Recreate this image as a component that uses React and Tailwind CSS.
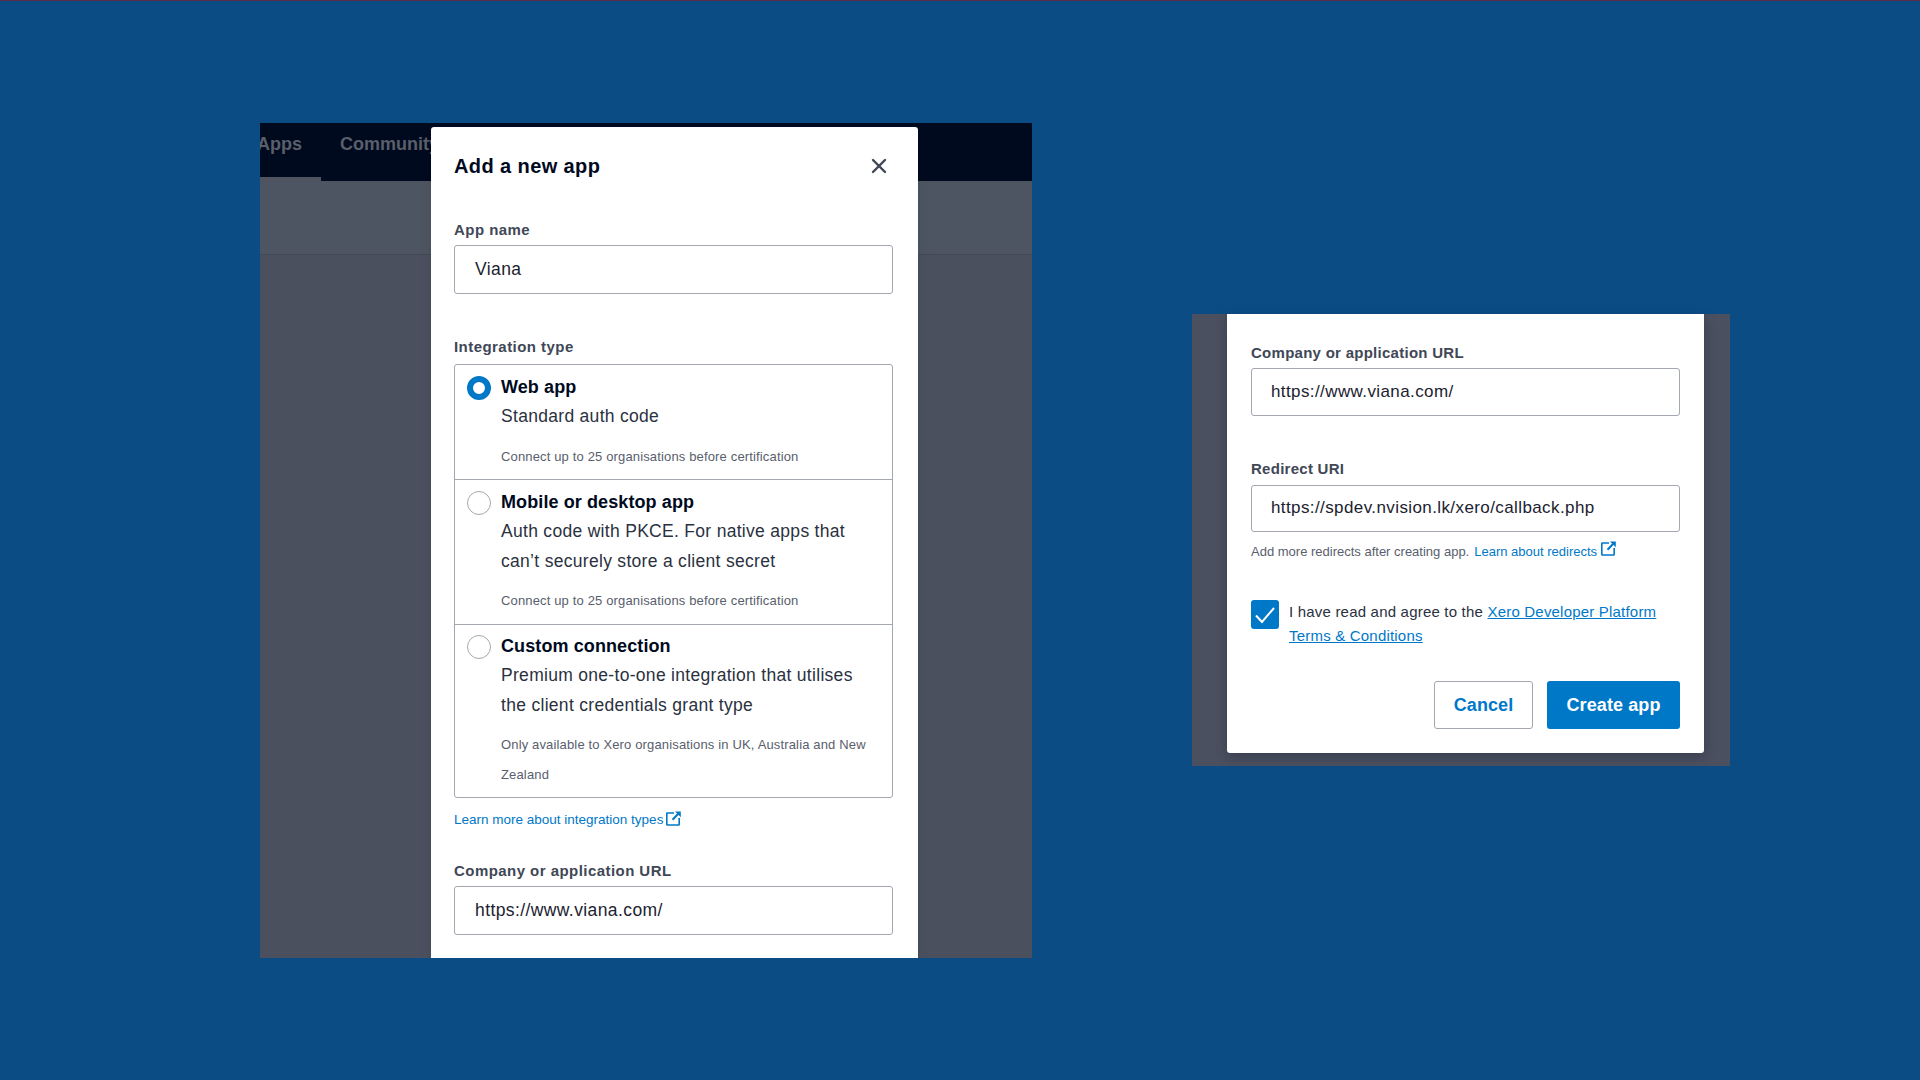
import { X } from 'lucide-react';

const font = { fontFamily: '"Liberation Sans", Arial, sans-serif' };

function ExternalIcon({ className }) {
  return (
    <svg viewBox="0 0 15 15" className={className} fill="none" stroke="currentColor">
      <path d="M8 2H1.4a.6.6 0 0 0-.6.6v10.8c0 .3.3.6.6.6h11.2c.3 0 .6-.3.6-.6V7" strokeWidth="1.6" />
      <path d="M6.5 8.8 12 3" strokeWidth="2" />
      <path d="M9 0.5H14.8V6.3z" fill="currentColor" stroke="none" />
    </svg>
  );
}

function Field({ label, value, labelClass, inputClass }) {
  return (
    <div>
      <div className={`text-[15px] leading-5 font-bold text-[#404756] ${labelClass}`}>{label}</div>
      <div className={`flex items-center rounded-[3px] border border-[#a3a7b0] tracking-[0.4px] text-[#1b2230] ${inputClass}`}>
        {value}
      </div>
    </div>
  );
}

function IntegrationRow({ selected, title, desc, hint, className }) {
  return (
    <div className={`flex pl-[12px] ${className}`}>
      {selected ? (
        <div className="mt-[1px] h-6 w-6 shrink-0 rounded-full border-[6px] border-[#0078c8] bg-white" />
      ) : (
        <div className="mt-[1px] h-6 w-6 shrink-0 rounded-full border border-[#a3a7b0] bg-white" />
      )}
      <div className="ml-[10px]">
        <div className="text-[18px] leading-6 font-bold tracking-[0.1px] text-[#000a1e]">{title}</div>
        <div className="mt-[3px] text-[17.5px] leading-[29.5px] tracking-[0.3px] text-[#2a3140]">
          {desc.map((line) => (
            <div key={line}>{line}</div>
          ))}
        </div>
        <div className="mt-[10px] text-[13px] leading-[30px] tracking-[0.15px] text-[#59606d]">
          {hint.map((line) => (
            <div key={line}>{line}</div>
          ))}
        </div>
      </div>
    </div>
  );
}

function AddAppModal() {
  return (
    <div className="absolute top-[4px] left-[171px] h-[831px] w-[487px] overflow-hidden rounded-t-[3px] bg-white pt-[27px] pr-[25px] pl-[23px] shadow-lg">
      <div className="flex items-center justify-between">
        <div className="text-[20px] leading-6 font-bold tracking-[0.4px] text-[#000a1e]">Add a new app</div>
        <X size={24} strokeWidth={2.4} className="mr-[2px] text-[#404756]" />
      </div>
      <Field label="App name" value="Viana" labelClass="mt-[42px] tracking-[0.45px]" inputClass="mt-[5px] h-[49px] pl-[20px] text-[17.5px]" />

      <div className="mt-[43px] text-[15px] leading-5 font-bold tracking-[0.45px] text-[#404756]">Integration type</div>
      <div className="mt-[7px] rounded-[3px] border border-[#a3a7b0]">
        <IntegrationRow
          selected
          className="h-[114px] pt-[10px]"
          title="Web app"
          desc={['Standard auth code']}
          hint={['Connect up to 25 organisations before certification']}
        />
        <IntegrationRow
          className="h-[145px] border-t border-[#a3a7b0] pt-[10px]"
          title="Mobile or desktop app"
          desc={['Auth code with PKCE. For native apps that', 'can’t securely store a client secret']}
          hint={['Connect up to 25 organisations before certification']}
        />
        <IntegrationRow
          className="h-[173px] border-t border-[#a3a7b0] pt-[9px]"
          title="Custom connection"
          desc={['Premium one-to-one integration that utilises', 'the client credentials grant type']}
          hint={['Only available to Xero organisations in UK, Australia and New', 'Zealand']}
        />
      </div>
      <div className="mt-[12px] flex items-start text-[13.5px] leading-5 text-[#0078c8]">
        <span>Learn more about integration types</span>
        <ExternalIcon className="mt-[1px] ml-[3px] h-[15px] w-[15px]" />
      </div>
      <Field label="Company or application URL" value="https://www.viana.com/" labelClass="mt-[31px] tracking-[0.45px]" inputClass="mt-[5px] h-[49px] pl-[20px] text-[17.5px]" />
    </div>
  );
}

function CreateAppModal() {
  return (
    <div className="w-[477px] rounded-b-[3px] bg-white px-[24px] pt-[29px] pb-[24px] shadow-[0_4px_12px_rgba(0,10,30,0.25)]">
      <Field label="Company or application URL" value="https://www.viana.com/" labelClass="tracking-[0.27px]" inputClass="mt-[5px] h-[48px] pl-[19px] text-[17px]" />
      <Field
        label="Redirect URI"
        value="https://spdev.nvision.lk/xero/callback.php"
        labelClass="mt-[43px] tracking-[0.27px]"
        inputClass="mt-[6px] h-[47px] pb-[2px] pl-[19px] text-[17px]"
      />
      <div className="mt-[10px] flex items-start text-[13px] leading-5 text-[#59606d]">
        <span>Add more redirects after creating app.</span>
        <span className="ml-[5px] text-[#0078c8]">Learn about redirects</span>
        <ExternalIcon className="mt-[-1px] ml-[4px] h-[15px] w-[15px] text-[#0078c8]" />
      </div>
      <div className="mt-[38px] flex">
        <div className="flex h-[29px] w-[28px] shrink-0 items-center justify-center rounded-[3px] bg-[#0078c8]">
          <svg viewBox="0 0 28 29" className="h-[29px] w-[28px]" fill="none" stroke="white" strokeWidth="2">
            <path d="M5 15.5 11 22 23 8" />
          </svg>
        </div>
        <div className="ml-[10px] text-[15px] leading-6 tracking-[0.2px] text-[#2a3140]">
          I have read and agree to the{' '}
          <span className="text-[#0078c8] underline">Xero Developer Platform</span>
          <br />
          <span className="text-[#0078c8] underline">Terms &amp; Conditions</span>
        </div>
      </div>
      <div className="mt-[33px] flex justify-end gap-[14px]">
        <div className="flex h-[48px] w-[99px] items-center justify-center rounded-[3px] border border-[#a3a7b0] text-[18px] font-bold tracking-[0.1px] text-[#0078c8]">
          Cancel
        </div>
        <div className="flex h-[48px] w-[133px] items-center justify-center rounded-[3px] bg-[#0078c8] text-[18px] font-bold tracking-[0.1px] text-white">
          Create app
        </div>
      </div>
    </div>
  );
}

export default function App() {
  return (
    <div style={font} className="flex h-[1080px] w-full items-start overflow-hidden border-t border-[#5e2a4a] bg-[#0b4c85] pt-[122px] pl-[260px]">
      <div className="relative h-[835px] w-[772px] shrink-0 overflow-hidden bg-[#4a505e]">
        <div className="flex h-[58px] bg-[#000a1f] text-[18px] font-bold text-[#5a5f6b]">
          <div className="flex h-[58px] w-[61px] items-center border-b-[4px] border-[#50545f] pb-[11px]">
            <span className="-ml-[3px]">Apps</span>
          </div>
          <div className="ml-[19px] flex items-center pb-[15px]">Community</div>
        </div>
        <div className="h-[74px] border-b border-[#434956] bg-[#4d5562]" />
        <AddAppModal />
      </div>
      <div className="mt-[191px] ml-[160px] h-[452px] w-[538px] shrink-0 bg-[#4a505f] pl-[35px]">
        <CreateAppModal />
      </div>
    </div>
  );
}
